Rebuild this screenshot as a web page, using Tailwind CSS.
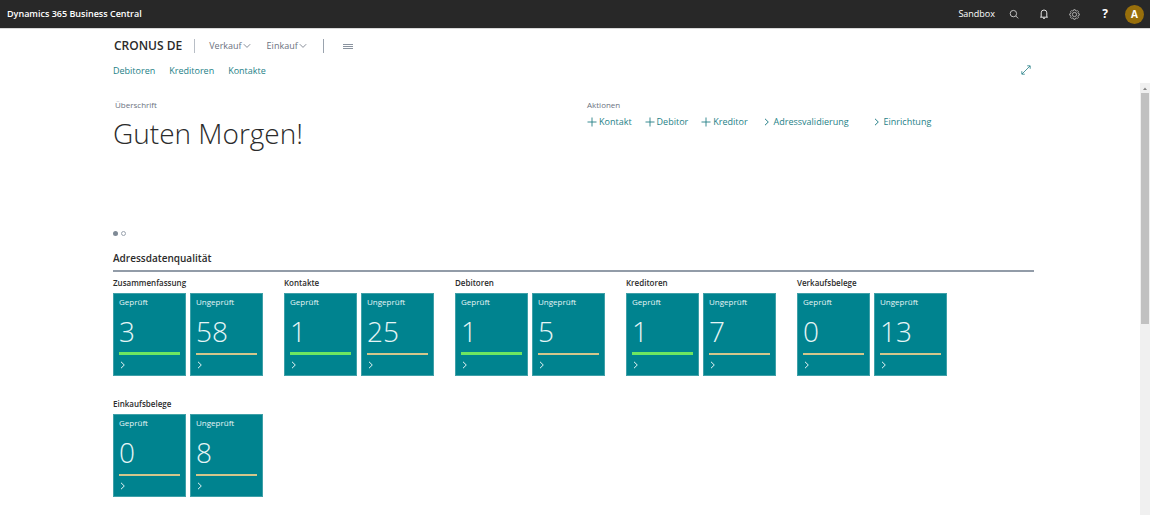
<!DOCTYPE html>
<html lang="de">
<head>
<meta charset="utf-8">
<meta name="viewport" content="width=device-width, initial-scale=1">
<title>Dynamics 365 Business Central</title>
<script src="https://cdn.jsdelivr.net/npm/@tailwindcss/browser@4"></script>
</head>
<body class="flex h-screen flex-col overflow-hidden bg-white font-['Open_Sans','Noto_Sans',sans-serif] text-[9px] leading-3 text-[#2b2b2b]">
<svg class="hidden">
  <symbol id="next" viewBox="0 0 6 8"><path d="M1 .8 4.3 4 1 7.2" fill="none" stroke="currentColor"/></symbol>
  <symbol id="down" viewBox="0 0 8 6"><path d="M.8 1.2 4 4.4 7.2 1.2" fill="none" stroke="currentColor" stroke-width=".8"/></symbol>
  <symbol id="plus" viewBox="0 0 10 10"><path d="M5 .5v9M.5 5h9" fill="none" stroke="currentColor" stroke-width=".9"/></symbol>
</svg>

<header class="flex h-7 shrink-0 items-center justify-between bg-[#282828] pr-[6px] pl-[7px] text-white">
  <a href="#" class="pb-px text-[9px] font-semibold">Dynamics 365 Business Central</a>
  <div class="flex items-center">
    <span class="mr-[14px] pb-px">Sandbox</span>
    <button aria-label="Suchen" class="mr-5 size-[10px]"><svg viewBox="0 0 10 10" class="size-[10px]" fill="none" stroke="#d0d0d0" stroke-width=".9"><circle cx="4.4" cy="4.6" r="3.2"/><path d="m6.8 7 2.4 2.4"/></svg></button>
    <button aria-label="Benachrichtigungen" class="mr-5 size-[10px]"><svg viewBox="0 0 10 10" class="size-[10px]" fill="none" stroke="#e4e4e4" stroke-width="1"><path d="M1.2 8.2h7.6M2.2 8V3.8a2.8 2.8 0 0 1 5.6 0V8M4 9.3h2"/></svg></button>
    <button aria-label="Einstellungen" class="mr-5 size-[11px]"><svg viewBox="0 0 12 12" class="size-[11px]" fill="none" stroke="#d8d8d8" stroke-width=".8"><path d="m4.900 1 .3-.2h1.600l.3 1 1 .4 1-.5 1.200 1.200-.5 1 .4 1 1 .3v1.600l-1 .3-.4 1 .5 1-1.200 1.200-1-.5-1 .4-.3 1H5.200l-.3-1-1-.4-1 .5-1.200-1.200.5-1-.4-1-1-.3V5.200l1-.3.4-1-.5-1 1.200-1.200 1 .5 1-.4z"/><circle cx="6" cy="6" r="2.300"/></svg></button>
    <button aria-label="Hilfe" class="mr-[15px] w-[10px] text-xs font-bold">?</button>
    <button aria-label="Konto" class="size-[19px] rounded-full bg-[#986f0b] text-[10px] font-bold">A</button>
  </div>
</header>

<div class="shrink-0 border-t border-[#d8d8d8] pr-[116px] pl-[113px]">
  <nav class="flex h-[34px] items-center text-[#6b7280]">
    <a href="#" class="pl-px text-xs font-semibold text-[#2b2b2b]">CRONUS DE</a>
    <span class="mx-3 h-[14px] w-px bg-[#b8bec6]"></span>
    <button class="ml-[2px] flex items-center gap-px">Verkauf<svg class="h-[6px] w-2"><use href="#down"/></svg></button>
    <button class="ml-4 flex items-center gap-px">Einkauf<svg class="h-[6px] w-2"><use href="#down"/></svg></button>
    <span class="mr-[19px] ml-4 h-[14px] w-px bg-[#9aa3ae]"></span>
    <button aria-label="Menü" class="flex w-[10px] flex-col gap-px"><span class="h-px bg-[#8a939f]"></span><span class="h-px bg-[#8a939f]"></span><span class="h-px bg-[#8a939f]"></span></button>
  </nav>
  <nav class="flex h-5 items-start gap-[14px] pt-[2px] text-[#257f87]">
    <a href="#">Debitoren</a><a href="#">Kreditoren</a><a href="#">Kontakte</a>
    <button aria-label="Vollbild" class="mr-[3px] ml-auto size-[10px]"><svg viewBox="0 0 10 10" class="size-[10px]" fill="none" stroke="currentColor" stroke-width=".8"><path d="m1 9 8-8M6.200.800h3v3M.800 6.200v3h3"/></svg></button>
  </nav>
</div>

<div class="flex min-h-0 flex-1">
  <main class="min-w-0 flex-1 overflow-hidden pr-[106px] pl-[113px]">
    <section class="grid h-[140px] grid-cols-[474px_1fr] pt-4">
      <div>
        <p class="pl-[2px] text-[8px] text-[#6b7280]">Überschrift</p>
        <h1 class="mt-1 text-[28px] leading-9 font-light">Guten Morgen!</h1>
      </div>
      <div>
        <p class="text-[8px] text-[#6b7280]">Aktionen</p>
        <div class="mt-[5px] flex text-[#257f87]">
          <button class="flex items-center gap-[2px]"><svg class="size-[10px]"><use href="#plus"/></svg>Kontakt</button>
          <button class="ml-[13px] flex items-center gap-[2px]"><svg class="size-[10px]"><use href="#plus"/></svg>Debitor</button>
          <button class="ml-[13px] flex items-center gap-[2px]"><svg class="size-[10px]"><use href="#plus"/></svg>Kreditor</button>
          <button class="ml-4 flex items-center gap-1"><svg class="h-2 w-[6px]"><use href="#next"/></svg>Adressvalidierung</button>
          <button class="ml-[25px] flex items-center gap-1"><svg class="h-2 w-[6px]"><use href="#next"/></svg>Einrichtung</button>
        </div>
      </div>
    </section>
    <div class="flex h-[22px] items-start gap-[3px] pt-2">
      <button aria-label="Seite 1" class="h-[5px] w-[5px] rounded-full bg-[#7f8a96]"></button>
      <button aria-label="Seite 2" class="h-[5px] w-[5px] rounded-full border border-[#9aa3ae]"></button>
    </div>
    <section>
      <h2 class="h-[27px] border-b-2 border-[#929ca8] pt-[5px] text-[10px] leading-4 font-semibold">Adressdatenqualität</h2>
      <div class="flex flex-wrap gap-x-[21px] gap-y-[22px] pt-[5px]">
        <div>
          <h3 class="mb-1 text-[8px] font-semibold">Zusammenfassung</h3>
          <div class="flex gap-1 text-[#e6f5f6]">
            <a href="#" class="flex h-[83px] w-[73px] flex-col border border-[#3fa0a8] bg-[#00838f] px-[5px] pt-[2px]"><span class="text-[8px]">Geprüft</span><span class="mt-[5px] text-[28px] leading-9 font-light">3</span><span class="mt-[3px] h-[3px] bg-[#6de661]"></span><svg class="mt-[6px] ml-px h-2 w-[6px]"><use href="#next"/></svg></a>
            <a href="#" class="flex h-[83px] w-[73px] flex-col border border-[#3fa0a8] bg-[#00838f] px-[5px] pt-[2px]"><span class="text-[8px]">Ungeprüft</span><span class="mt-[5px] text-[28px] leading-9 font-light">58</span><span class="mt-1 h-[2px] bg-[#d3c68b]"></span><svg class="mt-[6px] ml-px h-2 w-[6px]"><use href="#next"/></svg></a>
          </div>
        </div>
        <div>
          <h3 class="mb-1 text-[8px] font-semibold">Kontakte</h3>
          <div class="flex gap-1 text-[#e6f5f6]">
            <a href="#" class="flex h-[83px] w-[73px] flex-col border border-[#3fa0a8] bg-[#00838f] px-[5px] pt-[2px]"><span class="text-[8px]">Geprüft</span><span class="mt-[5px] text-[28px] leading-9 font-light">1</span><span class="mt-[3px] h-[3px] bg-[#6de661]"></span><svg class="mt-[6px] ml-px h-2 w-[6px]"><use href="#next"/></svg></a>
            <a href="#" class="flex h-[83px] w-[73px] flex-col border border-[#3fa0a8] bg-[#00838f] px-[5px] pt-[2px]"><span class="text-[8px]">Ungeprüft</span><span class="mt-[5px] text-[28px] leading-9 font-light">25</span><span class="mt-1 h-[2px] bg-[#d3c68b]"></span><svg class="mt-[6px] ml-px h-2 w-[6px]"><use href="#next"/></svg></a>
          </div>
        </div>
        <div>
          <h3 class="mb-1 text-[8px] font-semibold">Debitoren</h3>
          <div class="flex gap-1 text-[#e6f5f6]">
            <a href="#" class="flex h-[83px] w-[73px] flex-col border border-[#3fa0a8] bg-[#00838f] px-[5px] pt-[2px]"><span class="text-[8px]">Geprüft</span><span class="mt-[5px] text-[28px] leading-9 font-light">1</span><span class="mt-[3px] h-[3px] bg-[#6de661]"></span><svg class="mt-[6px] ml-px h-2 w-[6px]"><use href="#next"/></svg></a>
            <a href="#" class="flex h-[83px] w-[73px] flex-col border border-[#3fa0a8] bg-[#00838f] px-[5px] pt-[2px]"><span class="text-[8px]">Ungeprüft</span><span class="mt-[5px] text-[28px] leading-9 font-light">5</span><span class="mt-1 h-[2px] bg-[#d3c68b]"></span><svg class="mt-[6px] ml-px h-2 w-[6px]"><use href="#next"/></svg></a>
          </div>
        </div>
        <div>
          <h3 class="mb-1 text-[8px] font-semibold">Kreditoren</h3>
          <div class="flex gap-1 text-[#e6f5f6]">
            <a href="#" class="flex h-[83px] w-[73px] flex-col border border-[#3fa0a8] bg-[#00838f] px-[5px] pt-[2px]"><span class="text-[8px]">Geprüft</span><span class="mt-[5px] text-[28px] leading-9 font-light">1</span><span class="mt-[3px] h-[3px] bg-[#6de661]"></span><svg class="mt-[6px] ml-px h-2 w-[6px]"><use href="#next"/></svg></a>
            <a href="#" class="flex h-[83px] w-[73px] flex-col border border-[#3fa0a8] bg-[#00838f] px-[5px] pt-[2px]"><span class="text-[8px]">Ungeprüft</span><span class="mt-[5px] text-[28px] leading-9 font-light">7</span><span class="mt-1 h-[2px] bg-[#d3c68b]"></span><svg class="mt-[6px] ml-px h-2 w-[6px]"><use href="#next"/></svg></a>
          </div>
        </div>
        <div>
          <h3 class="mb-1 text-[8px] font-semibold">Verkaufsbelege</h3>
          <div class="flex gap-1 text-[#e6f5f6]">
            <a href="#" class="flex h-[83px] w-[73px] flex-col border border-[#3fa0a8] bg-[#00838f] px-[5px] pt-[2px]"><span class="text-[8px]">Geprüft</span><span class="mt-[5px] text-[28px] leading-9 font-light">0</span><span class="mt-1 h-[2px] bg-[#d3c68b]"></span><svg class="mt-[6px] ml-px h-2 w-[6px]"><use href="#next"/></svg></a>
            <a href="#" class="flex h-[83px] w-[73px] flex-col border border-[#3fa0a8] bg-[#00838f] px-[5px] pt-[2px]"><span class="text-[8px]">Ungeprüft</span><span class="mt-[5px] text-[28px] leading-9 font-light">13</span><span class="mt-1 h-[2px] bg-[#d3c68b]"></span><svg class="mt-[6px] ml-px h-2 w-[6px]"><use href="#next"/></svg></a>
          </div>
        </div>
        <div>
          <h3 class="mb-1 text-[8px] font-semibold">Einkaufsbelege</h3>
          <div class="flex gap-1 text-[#e6f5f6]">
            <a href="#" class="flex h-[83px] w-[73px] flex-col border border-[#3fa0a8] bg-[#00838f] px-[5px] pt-[2px]"><span class="text-[8px]">Geprüft</span><span class="mt-[5px] text-[28px] leading-9 font-light">0</span><span class="mt-1 h-[2px] bg-[#d3c68b]"></span><svg class="mt-[6px] ml-px h-2 w-[6px]"><use href="#next"/></svg></a>
            <a href="#" class="flex h-[83px] w-[73px] flex-col border border-[#3fa0a8] bg-[#00838f] px-[5px] pt-[2px]"><span class="text-[8px]">Ungeprüft</span><span class="mt-[5px] text-[28px] leading-9 font-light">8</span><span class="mt-1 h-[2px] bg-[#d3c68b]"></span><svg class="mt-[6px] ml-px h-2 w-[6px]"><use href="#next"/></svg></a>
          </div>
        </div>
      </div>
    </section>
  </main>
  <div class="flex w-[10px] shrink-0 flex-col items-center bg-[#f0f0f0]">
    <svg viewBox="0 0 10 10" class="size-[10px]"><path d="M3 7h4L5 4.500z" fill="#858585"/></svg>
    <div class="h-[231px] w-2 bg-[#c1c1c1]"></div>
  </div>
</div>
</body>
</html>
